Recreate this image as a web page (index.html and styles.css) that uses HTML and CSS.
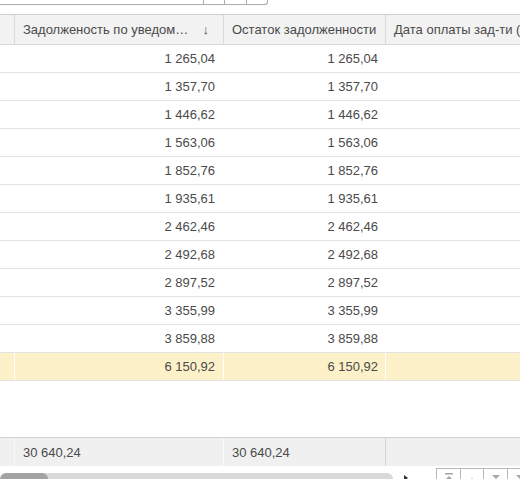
FILE: index.html
```html
<!DOCTYPE html>
<html lang="ru">
<head>
<meta charset="utf-8">
<link rel="stylesheet" href="styles.css">
</head>
<body>
<div class="topbar">
  <div class="seg seg-a"></div>
  <div class="seg seg-b"></div>
  <div class="seg seg-c"></div>
  <div class="seg seg-d"></div>
</div>

<div class="table">
  <div class="row head">
    <div class="cell c0"></div>
    <div class="cell c1 sortable"><span class="label">Задолженость по уведом…</span><span class="arrow">↓</span></div>
    <div class="cell c2">Остаток задолженности</div>
    <div class="cell c3">Дата оплаты зад-ти (</div>
  </div>

  <div class="body">
    <div class="row data"><div class="cell c0"></div><div class="cell c1 num">1 265,04</div><div class="cell c2 num">1 265,04</div><div class="cell c3"></div></div>
    <div class="row data"><div class="cell c0"></div><div class="cell c1 num">1 357,70</div><div class="cell c2 num">1 357,70</div><div class="cell c3"></div></div>
    <div class="row data"><div class="cell c0"></div><div class="cell c1 num">1 446,62</div><div class="cell c2 num">1 446,62</div><div class="cell c3"></div></div>
    <div class="row data"><div class="cell c0"></div><div class="cell c1 num">1 563,06</div><div class="cell c2 num">1 563,06</div><div class="cell c3"></div></div>
    <div class="row data"><div class="cell c0"></div><div class="cell c1 num">1 852,76</div><div class="cell c2 num">1 852,76</div><div class="cell c3"></div></div>
    <div class="row data"><div class="cell c0"></div><div class="cell c1 num">1 935,61</div><div class="cell c2 num">1 935,61</div><div class="cell c3"></div></div>
    <div class="row data"><div class="cell c0"></div><div class="cell c1 num">2 462,46</div><div class="cell c2 num">2 462,46</div><div class="cell c3"></div></div>
    <div class="row data"><div class="cell c0"></div><div class="cell c1 num">2 492,68</div><div class="cell c2 num">2 492,68</div><div class="cell c3"></div></div>
    <div class="row data"><div class="cell c0"></div><div class="cell c1 num">2 897,52</div><div class="cell c2 num">2 897,52</div><div class="cell c3"></div></div>
    <div class="row data"><div class="cell c0"></div><div class="cell c1 num">3 355,99</div><div class="cell c2 num">3 355,99</div><div class="cell c3"></div></div>
    <div class="row data"><div class="cell c0"></div><div class="cell c1 num">3 859,88</div><div class="cell c2 num">3 859,88</div><div class="cell c3"></div></div>
    <div class="row data selected"><div class="cell c0"></div><div class="cell c1 num">6 150,92</div><div class="cell c2 num">6 150,92</div><div class="cell c3"></div></div>
  </div>

  <div class="row foot">
    <div class="cell c0"></div>
    <div class="cell c1">30 640,24</div>
    <div class="cell c2">30 640,24</div>
    <div class="cell c3"></div>
  </div>
</div>

<div class="bottombar">
  <div class="track"><div class="thumb"></div></div>
  <div class="scroll-arrow"></div>
  <div class="navbtns">
    <div class="navbtn nb1">
      <svg width="10" height="8" viewBox="0 0 10 8"><rect x="1" y="0" width="8" height="1.5" fill="#a6a6a6"/><path d="M1 7 L5 3 L9 7 Z" fill="#a6a6a6"/></svg>
    </div>
    <div class="navbtn nb2">
      <svg width="10" height="8" viewBox="0 0 10 8"><path d="M1 7 L5 3 L9 7 Z" fill="#a6a6a6"/></svg>
    </div>
    <div class="navbtn nb3">
      <svg width="10" height="8" viewBox="0 0 10 8"><path d="M1 1 L5 5 L9 1 Z" fill="#a6a6a6"/></svg>
    </div>
    <div class="navbtn nb4">
      <svg width="10" height="8" viewBox="0 0 10 8"><path d="M1 1 L5 5 L9 1 Z" fill="#a6a6a6"/></svg>
    </div>
  </div>
</div>
</body>
</html>
```

FILE: styles.css
```css
* {
  box-sizing: border-box;
}

html, body {
  margin: 0;
  padding: 0;
  background: #ffffff;
}

body {
  width: 520px;
  height: 479px;
  overflow: hidden;
  font-family: "Liberation Sans", Arial, sans-serif;
  font-size: 13px;
  color: #4a4a4a;
}

/* top toolbar remnant */
.topbar {
  display: flex;
  width: 268px;
  height: 5px;
  border-bottom: 1px solid #ababab;
  border-right: 1px solid #ababab;
  border-bottom-right-radius: 3px;
}

.seg {
  height: 4px;
  border-right: 1px solid #ababab;
}

.seg-a { width: 204px; }
.seg-b { width: 21px; }
.seg-c { width: 22px; }
.seg-d { width: 20px; border-right: none; }

/* table */
.table {
  margin-top: 9px;
}

.row {
  display: grid;
  grid-template-columns: 14px 209px 162px 1fr;
}

.cell {
  display: flex;
  align-items: center;
  padding: 0 8px;
  white-space: nowrap;
  overflow: hidden;
}

.c0 {
  padding: 0;
}

.c1, .c2, .c3 {
  border-left: 1px solid transparent;
}

.head {
  height: 31px;
  background: #f2f2f2;
  border-top: 1px solid #cfcfcf;
  border-bottom: 1px solid #d6d6d6;
}

.head .c1, .head .c2, .head .c3 {
  border-left-color: #d9d9d9;
}

.sortable {
  padding-right: 14px;
}

.sortable .label {
  flex: 1;
}

.arrow {
  font-size: 13px;
  color: #4a4a4a;
}

.body {
  height: 392px;
}

.data {
  height: 28px;
  border-bottom: 1px solid #e4e4e4;
}

.num {
  justify-content: flex-end;
  padding-right: 8px;
}

.c2.num {
  padding-right: 7px;
}

.selected {
  background: #fcf1c8;
}

.selected .c1, .selected .c2, .selected .c3 {
  border-left-color: #ffffff;
}

.foot {
  height: 29px;
  background: #f0f0f0;
  border-top: 1px solid #d0d0d0;
}

.foot .c1, .foot .c2 {
  border-left-color: #fafafa;
}

.foot .c3 {
  border-left-color: #d4d4d4;
}

/* bottom bar: scrollbar + navigation buttons */
.bottombar {
  display: flex;
  align-items: flex-start;
  margin-top: 1px;
  height: 14px;
}

.bottombar > * {
  flex-shrink: 0;
}

.track {
  width: 393px;
  height: 12px;
  margin-top: 6px;
  background: #d9d9d9;
  border-radius: 6px;
  overflow: hidden;
}

.thumb {
  width: 48px;
  height: 12px;
  background: #a2a2a2;
  border-radius: 6px;
}

.scroll-arrow {
  width: 0;
  height: 0;
  margin-left: 11px;
  margin-top: 8px;
  border-left: 4px solid #333333;
  border-top: 3px solid transparent;
  border-bottom: 3px solid transparent;
}

.navbtns {
  display: flex;
  margin-left: 28px;
  margin-top: 1px;
}

.navbtn {
  flex-shrink: 0;
  height: 20px;
  border-top: 1px solid #b8b8b8;
  border-left: 1px solid #b8b8b8;
  display: flex;
  justify-content: center;
  padding-top: 4px;
}

.nb1 { width: 24px; }
.nb2 { width: 23px; padding-top: 6px; }
.nb3 { width: 24px; padding-top: 5px; }
.nb4 { width: 24px; padding-top: 5px; }
```
